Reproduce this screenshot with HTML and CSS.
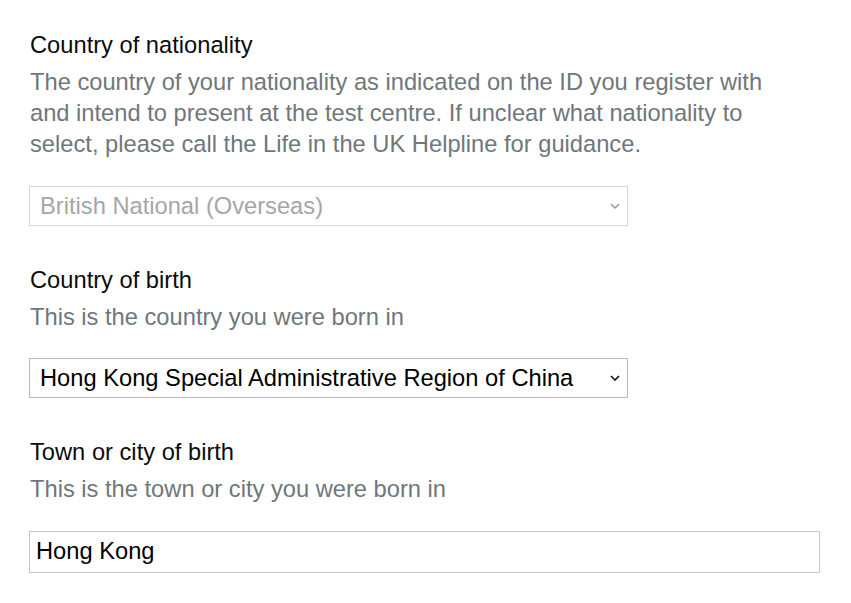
FILE: index.html
```html
<!DOCTYPE html>
<html lang="en">
<head>
<meta charset="utf-8">
<title>Nationality and birth</title>
<link rel="stylesheet" href="styles.css">
</head>
<body>
<form class="form">
  <div class="group">
    <label class="label" for="nat">Country of nationality</label>
    <p class="hint">The country of your nationality as indicated on the ID you register with and intend to present at the test centre. If unclear what nationality to select, please call the Life in the UK Helpline for guidance.</p>
    <div class="select-wrap">
      <select id="nat" class="select" disabled>
        <option>British National (Overseas)</option>
      </select>
      <svg class="chev chev-disabled" width="10" height="6" viewBox="0 0 10 6"><path d="M1 1 L5 5 L9 1" fill="none" stroke="currentColor" stroke-width="1.5"/></svg>
    </div>
  </div>
  <div class="group">
    <label class="label" for="cob">Country of birth</label>
    <p class="hint">This is the country you were born in</p>
    <div class="select-wrap">
      <select id="cob" class="select select-active">
        <option>Hong Kong Special Administrative Region of China</option>
      </select>
      <svg class="chev" width="10" height="6" viewBox="0 0 10 6"><path d="M1 1 L5 5 L9 1" fill="none" stroke="currentColor" stroke-width="1.6"/></svg>
    </div>
  </div>
  <div class="group">
    <label class="label" for="town">Town or city of birth</label>
    <p class="hint">This is the town or city you were born in</p>
    <input id="town" class="input" type="text" value="Hong Kong">
  </div>
</form>
</body>
</html>
```
FILE: styles.css
```css
html, body {
  margin: 0;
  padding: 0;
  background: #ffffff;
}
body {
  font-family: "Liberation Sans", Arial, sans-serif;
  color: #0b0c0c;
}
.form {
  padding: 30px 0 0 30px;
}
.group {
  display: flex;
  flex-direction: column;
  align-items: flex-start;
  margin-bottom: 39px;
}
.label {
  font-size: 23.7px;
  line-height: 31px;
  color: #0b0c0c;
  margin-bottom: 6px;
}
.hint {
  margin: 0 0 25.5px 0;
  font-size: 23.7px;
  line-height: 31px;
  color: #6f777b;
  max-width: 748px;
}
.select-wrap {
  position: relative;
  width: 598px;
}
.select {
  -webkit-appearance: none;
  appearance: none;
  display: block;
  box-sizing: border-box;
  width: 599px;
  height: 40px;
  margin: 0 0 0 -1px;
  padding: 0 30px 0 10px;
  font-family: "Liberation Sans", Arial, sans-serif;
  font-size: 23.7px;
  background: #ffffff;
  border: 1px solid #d6d6d6;
  border-radius: 0;
  color: #a6a6a6;
  opacity: 1;
}
.select-active {
  border-color: #b8b8b8;
  color: #000000;
}
.chev {
  position: absolute;
  right: 8px;
  top: 17px;
  color: #111111;
}
.chev-disabled {
  color: #9a9a9a;
}
.input {
  display: block;
  box-sizing: border-box;
  width: 791px;
  height: 42px;
  margin: 0 0 0 -1px;
  padding: 0 6px;
  font-family: "Liberation Sans", Arial, sans-serif;
  font-size: 23.7px;
  color: #000000;
  border: 1px solid #c6c6c6;
  border-radius: 0;
  background: #ffffff;
  outline: none;
}
```
